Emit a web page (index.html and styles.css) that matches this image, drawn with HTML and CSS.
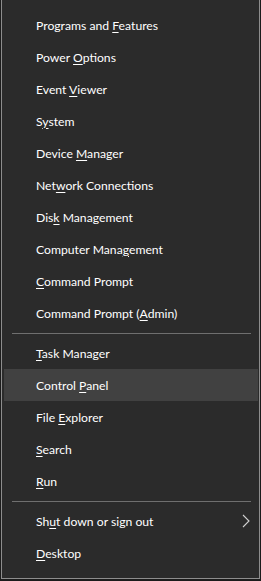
FILE: index.html
```html
<!DOCTYPE html>
<html lang="en">
<head>
    <meta charset="UTF-8">
    <title>Quick Link Menu</title>
    <link rel="stylesheet" href="styles.css">
</head>
<body>

    <div class="menu">
        <ul class="menu-list">
            <li class="item"><span>Programs and <u>F</u>eatures</span></li>
            <li class="item"><span>Power <u>O</u>ptions</span></li>
            <li class="item"><span>Event <u>V</u>iewer</span></li>
            <li class="item"><span>S<u>y</u>stem</span></li>
            <li class="item"><span>Device <u>M</u>anager</span></li>
            <li class="item"><span>Net<u>w</u>ork Connections</span></li>
            <li class="item"><span>Dis<u>k</u> Management</span></li>
            <li class="item"><span>Computer Mana<u>g</u>ement</span></li>
            <li class="item"><span><u>C</u>ommand Prompt</span></li>
            <li class="item"><span>Command Prompt (<u>A</u>dmin)</span></li>
            <li class="sep"></li>
            <li class="item"><span><u>T</u>ask Manager</span></li>
            <li class="item active"><span>Control <u>P</u>anel</span></li>
            <li class="item"><span>File <u>E</u>xplorer</span></li>
            <li class="item"><span><u>S</u>earch</span></li>
            <li class="item"><span><u>R</u>un</span></li>
            <li class="sep"></li>
            <li class="item has-sub">
                <span>Sh<u>u</u>t down or sign out</span>
                <svg class="chevron" width="8" height="14" viewBox="0 0 8 14">
                    <path d="M1 1 L7 7 L1 13" fill="none" stroke="#d0d0d0" stroke-width="1.1"/>
                </svg>
            </li>
            <li class="item"><span><u>D</u>esktop</span></li>
        </ul>
    </div>

</body>
</html>
```

FILE: styles.css
```css
body {
    margin: 0;
    padding: 0;
    background-color: #1c1c1c;
    font-family: Lato, "Noto Sans", Arial, sans-serif;
    font-size: 12.2px;
    color: #ffffff;
}
.menu {
    margin-left: 1px;
    width: 257px;
    height: 578px;
    box-sizing: content-box;
    background-color: #2b2b2b;
    border: 1px solid #8d8d8d;
    border-top: none;
}
.menu-list {
    list-style: none;
    margin: 0;
    padding: 9px 1px 0 2px;
}
.item {
    display: flex;
    align-items: center;
    height: 32px;
    padding-left: 32px;
    padding-right: 8px;
    white-space: nowrap;
}
.item u {
    text-decoration-thickness: 1px;
    text-underline-offset: 2px;
}
.item.active {
    background-color: #414141;
}
.has-sub {
    justify-content: space-between;
}
.chevron {
    display: block;
}
.sep {
    height: 8px;
    display: flex;
    align-items: center;
    padding: 0 7px 0 8px;
}
.sep::after {
    content: "";
    flex: 1;
    height: 1px;
    background-color: #6f6f6f;
}
```
